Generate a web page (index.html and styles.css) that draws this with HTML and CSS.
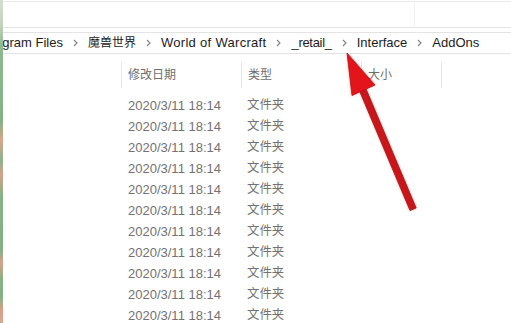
FILE: index.html
```html
<!DOCTYPE html>
<html lang="zh">
<head>
<meta charset="utf-8">
<title>AddOns</title>
<link rel="stylesheet" href="styles.css">
</head>
<body>
<div class="window">
  <div class="strip"></div>
  <div class="main">
    <div class="ribbon">
      <div class="ribbon-left"></div>
    </div>
    <div class="address">
      <span class="crumb first">Program Files</span>
      <span class="sep"><svg width="5" height="8" viewBox="0 0 5 8"><polyline points="1,1 4,4 1,7" fill="none" stroke="#808080" stroke-width="1.1"/></svg></span>
      <span class="crumb cjk">魔兽世界</span>
      <span class="sep"><svg width="5" height="8" viewBox="0 0 5 8"><polyline points="1,1 4,4 1,7" fill="none" stroke="#808080" stroke-width="1.1"/></svg></span>
      <span class="crumb wide">World of Warcraft</span>
      <span class="sep"><svg width="5" height="8" viewBox="0 0 5 8"><polyline points="1,1 4,4 1,7" fill="none" stroke="#808080" stroke-width="1.1"/></svg></span>
      <span class="crumb tight">_retail_</span>
      <span class="sep"><svg width="5" height="8" viewBox="0 0 5 8"><polyline points="1,1 4,4 1,7" fill="none" stroke="#808080" stroke-width="1.1"/></svg></span>
      <span class="crumb">Interface</span>
      <span class="sep"><svg width="5" height="8" viewBox="0 0 5 8"><polyline points="1,1 4,4 1,7" fill="none" stroke="#808080" stroke-width="1.1"/></svg></span>
      <span class="crumb">AddOns</span>
    </div>
    <div class="list">
      <div class="head">
        <div class="hcell">修改日期</div>
        <div class="hcell">类型</div>
        <div class="hcell">大小</div>
        <div class="hcell last"></div>
      </div>
      <div class="row"><span class="c-date">2020/3/11 18:14</span><span class="c-type">文件夹</span></div>
      <div class="row"><span class="c-date">2020/3/11 18:14</span><span class="c-type">文件夹</span></div>
      <div class="row"><span class="c-date">2020/3/11 18:14</span><span class="c-type">文件夹</span></div>
      <div class="row"><span class="c-date">2020/3/11 18:14</span><span class="c-type">文件夹</span></div>
      <div class="row"><span class="c-date">2020/3/11 18:14</span><span class="c-type">文件夹</span></div>
      <div class="row"><span class="c-date">2020/3/11 18:14</span><span class="c-type">文件夹</span></div>
      <div class="row"><span class="c-date">2020/3/11 18:14</span><span class="c-type">文件夹</span></div>
      <div class="row"><span class="c-date">2020/3/11 18:14</span><span class="c-type">文件夹</span></div>
      <div class="row"><span class="c-date">2020/3/11 18:14</span><span class="c-type">文件夹</span></div>
      <div class="row"><span class="c-date">2020/3/11 18:14</span><span class="c-type">文件夹</span></div>
      <div class="row"><span class="c-date">2020/3/11 18:14</span><span class="c-type">文件夹</span></div>
    </div>
  </div>
  <svg class="arrow" width="511" height="323" viewBox="0 0 511 323">
    <defs>
      <filter id="glow" x="-20%" y="-20%" width="140%" height="140%">
        <feGaussianBlur stdDeviation="1.6"/>
      </filter>
    </defs>
    <g filter="url(#glow)" opacity="0.45" fill="#ff4a4a">
      <polygon points="347,53 375,84.5 351.5,96"/>
      <polygon points="363.6,83 357.2,85.6 410,210.6 416.2,208"/>
    </g>
    <polygon points="363.6,83 357.2,85.6 410,210.6 416.2,208" fill="#c8161a" stroke="#a80f12" stroke-width="0.8"/>
    <polygon points="347,53 375,85 352,95.5" fill="#e3151b" stroke="#b80f14" stroke-width="0.8"/>
  </svg>
</div>
</body>
</html>
```

FILE: styles.css
```css
html, body {
  margin: 0;
  padding: 0;
  background: #ffffff;
}
body {
  width: 511px;
  height: 323px;
  overflow: hidden;
  font-family: "Liberation Sans", "Noto Sans CJK SC", sans-serif;
}
.window {
  position: relative;
  display: flex;
  width: 511px;
  height: 323px;
}
.strip {
  width: 3px;
  flex: none;
  background: linear-gradient(to bottom,
    #d3ddcf 0px, #c4d4bf 25px, #8fb98f 45px, #82b284 120px,
    #d8a58b 140px, #8cb48a 160px, #d6a08a 175px, #86b385 195px,
    #83b183 250px, #d9a088 262px, #84b283 280px,
    #86b385 298px, #dc9c8a 310px, #d7a793 323px);
}
.main {
  flex: 1;
  min-width: 0;
  overflow: hidden;
}
.ribbon {
  height: 25px;
  margin-top: 1px;
  border-top: 1px solid #e9e9e9;
  border-bottom: 1px solid #e4e4e4;
  display: flex;
}
.ribbon-left {
  width: 411px;
  border-right: 1px solid #f0f0f0;
}
.address {
  margin-top: 4px;
  height: 20px;
  border-top: 1px solid #e3e3e3;
  border-bottom: 1px solid #e3e3e3;
  display: flex;
  align-items: center;
  white-space: nowrap;
  font-size: 13px;
  color: #1c1c1c;
}
.crumb {
  flex: none;
  line-height: 20px;
}
.crumb.first {
  margin-left: -21px;
}
.crumb.cjk {
  font-size: 12px;
}
.crumb.wide {
  letter-spacing: 0.3px;
}
.crumb.tight {
  letter-spacing: -0.3px;
}
.sep {
  flex: none;
  width: 25px;
  display: flex;
  justify-content: center;
  align-items: center;
}
.sep svg {
  display: block;
}
.list {
  margin-top: 8px;
  padding-left: 118px;
  font-size: 12px;
  color: #6e6e6e;
}
.head {
  display: grid;
  grid-template-columns: 120px 120px 80px 40px;
  height: 26px;
  margin-bottom: 7px;
}
.hcell {
  border-left: 1px solid #e6e6e6;
  padding-left: 6px;
  line-height: 26px;
}
.row {
  display: grid;
  grid-template-columns: 120px 120px;
  height: 21px;
  line-height: 21px;
  color: #727272;
}
.c-date {
  padding-left: 7px;
  font-size: 13px;
}
.c-type {
  padding-left: 6px;
  font-size: 12.4px;
}
.arrow {
  position: absolute;
  left: 0;
  top: 0;
  pointer-events: none;
}
```
